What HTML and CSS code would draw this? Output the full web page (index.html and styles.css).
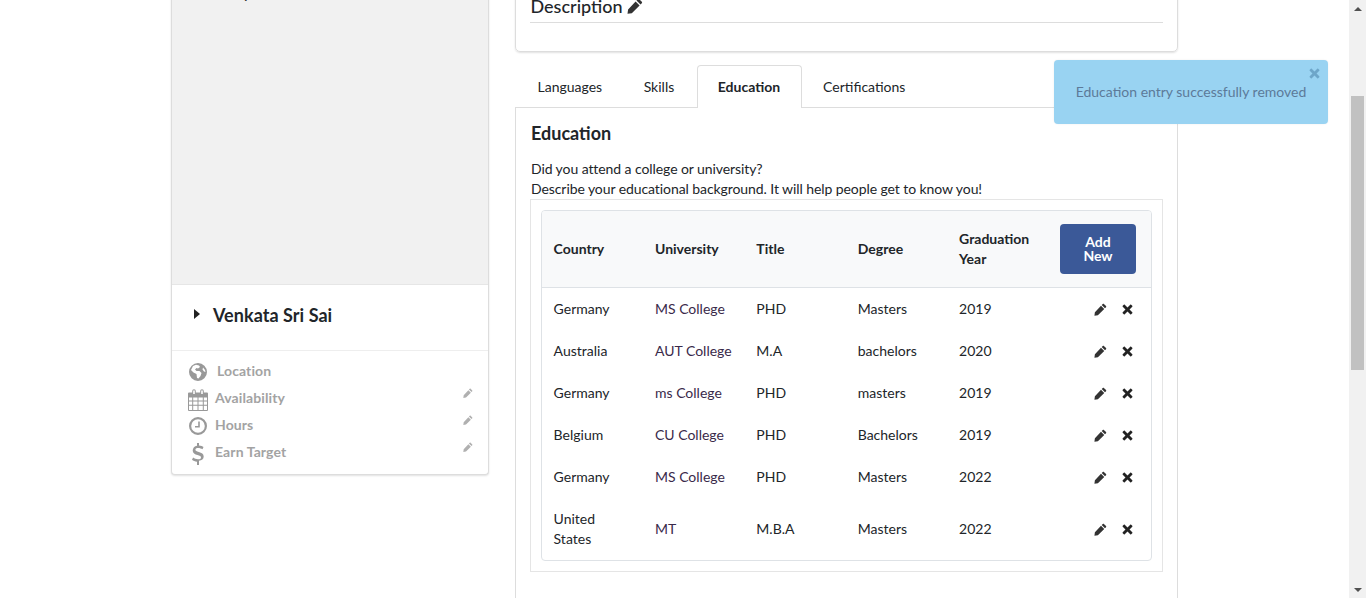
FILE: index.html

```html
<!DOCTYPE html>
<html>
<head>
    <title>Profile - Education</title>
    <link rel="stylesheet" href="styles.css">
</head>
<body>
    <svg class="icon-defs" width="0" height="0">
        <symbol id="pencil" viewBox="0 0 16 16">
            <path d="M12.200 1.200l2.600 2.600c.4.400.4 1 0 1.400l-1.300 1.300-4-4 1.300-1.300c.4-.4 1-.4 1.400 0zM8.600 3.400l4 4-7.800 7.800-4.300.6.600-4.400z"/>
        </symbol>
        <symbol id="cross" viewBox="0 0 12 12">
            <path d="M3 .8L6 3.800 9 .8c.3-.3.7-.3 1 0l1.200 1.200c.3.3.3.7 0 1L8.200 6l3 3c.3.3.3.7 0 1L10 11.200c-.3.3-.7.3-1 0L6 8.200l-3 3c-.3.3-.7.3-1 0L.8 10c-.3-.3-.3-.7 0-1l3-3-3-3c-.3-.3-.3-.7 0-1L2 .8c.3-.3.7-.3 1 0z"/>
        </symbol>
    </svg>

    <div class="window">
        <div class="page">
            <aside class="profile-card">
                <div class="profile-photo"><span class="photo-text">My</span></div>
                <div class="profile-name">
                    <span class="caret"></span>
                    <h2>Venkata Sri Sai</h2>
                </div>
                <ul class="profile-facts">
                    <li>
                        <svg class="fact-icon icon-globe" viewBox="0 0 20 20"><path d="M10 1a9 9 0 1 0 0 18 9 9 0 0 0 0-18zM5 4l3-1.200 3 .6 1 1.600-2 1.500-1.500-.5-1.500 1.500 1.500 1.500h3l2 2-1 3-2 2.500-1.500-.5-.5-4-3-1.500-2.500-2.500zM15 5.500l2 2.500.5 2-1.500-.5-1.500-2z" fill-rule="evenodd"/></svg>
                        <span class="fact-label fact-location">Location</span>
                    </li>
                    <li>
                        <svg class="fact-icon icon-calendar" viewBox="0 0 20 22"><path d="M4.200 3.500V2a1.800 1.800 0 0 1 3.600 0v1.500h4.400V2a1.800 1.800 0 0 1 3.600 0v1.500h3.200a1 1 0 0 1 1 1V21a1 1 0 0 1-1 1H1a1 1 0 0 1-1-1V4.500a1 1 0 0 1 1-1zM5.200 2v3h1.600V2a.8.8 0 0 0-1.600 0zm8 0v3h1.600V2a.8.8 0 0 0-1.600 0zM1 8.500v3h3.200v-3zm4.200 0v3h4.300v-3zm5.300 0v3h4.300v-3zm5.300 0v3H19v-3zM1 12.500v3.200h3.200v-3.200zm4.200 0v3.200h4.300v-3.200zm5.300 0v3.200h4.300v-3.200zm5.300 0v3.200H19v-3.200zM1 16.700V21h3.200v-4.300zm4.200 0V21h4.300v-4.300zm5.300 0V21h4.300v-4.300zm5.300 0V21H19v-4.300z" fill-rule="evenodd"/></svg>
                        <span class="fact-label">Availability</span>
                        <svg class="fact-edit"><use href="#pencil"/></svg>
                    </li>
                    <li>
                        <svg class="fact-icon icon-clock" viewBox="0 0 20 20"><path d="M10 1a9 9 0 1 0 0 18 9 9 0 0 0 0-18zm0 2.200a6.800 6.800 0 1 1 0 13.600 6.800 6.800 0 0 1 0-13.600zM10.200 5.500h1.600v6H7v-1.600h3.200z" fill-rule="evenodd"/></svg>
                        <span class="fact-label">Hours</span>
                        <svg class="fact-edit"><use href="#pencil"/></svg>
                    </li>
                    <li>
                        <svg class="fact-icon icon-dollar" viewBox="0 0 20 22"><path d="M9 0h2v2.600c2 .2 3.500.8 4.500 1.500l-1 2.200c-1.200-.7-2.700-1.300-4.400-1.300-1.700 0-2.700.6-2.700 1.700 0 1.200 1.300 1.600 3.400 2.200 2.800.8 4.900 1.800 4.900 4.500 0 2.500-1.900 4-4.700 4.300V22H9v-3.300c-2-.2-3.800-.9-5-1.900l1.100-2.200c1.400 1 3.100 1.700 4.900 1.700 1.900 0 3-.7 3-1.900 0-1.300-1.300-1.800-3.500-2.400C6.900 11.200 4.700 10.200 4.700 7.700c0-2.600 1.800-4.800 4.300-5z"/></svg>
                        <span class="fact-label">Earn Target</span>
                        <svg class="fact-edit"><use href="#pencil"/></svg>
                    </li>
                </ul>
            </aside>

            <main class="content">
                <section class="description-card">
                    <h3 class="description-title">Description<svg class="title-edit"><use href="#pencil"/></svg></h3>
                </section>

                <nav class="tabs">
                    <a class="tab tab-first">Languages</a>
                    <a class="tab tab-skills">Skills</a>
                    <a class="tab tab-active">Education</a>
                    <a class="tab">Certifications</a>
                </nav>

                <section class="tab-panel">
                    <h3 class="panel-title">Education</h3>
                    <p class="panel-intro">Did you attend a college or university?<br>Describe your educational background. It will help people get to know you!</p>
                    <div class="table-frame">
                        <div class="table-box">
                            <table class="edu-table">
                                <thead>
                                    <tr>
                                        <th class="col-country">Country</th>
                                        <th class="col-university">University</th>
                                        <th class="col-title">Title</th>
                                        <th class="col-degree">Degree</th>
                                        <th class="col-year">Graduation Year</th>
                                        <th class="col-actions"><button class="add-btn">Add New</button></th>
                                    </tr>
                                </thead>
                                <tbody>
                                    <tr>
                                        <td>Germany</td><td class="uni">MS College</td><td>PHD</td><td>Masters</td><td>2019</td>
                                        <td class="row-actions"><svg class="act-edit"><use href="#pencil"/></svg><svg class="act-del"><use href="#cross"/></svg></td>
                                    </tr>
                                    <tr>
                                        <td>Australia</td><td class="uni">AUT College</td><td>M.A</td><td>bachelors</td><td>2020</td>
                                        <td class="row-actions"><svg class="act-edit"><use href="#pencil"/></svg><svg class="act-del"><use href="#cross"/></svg></td>
                                    </tr>
                                    <tr>
                                        <td>Germany</td><td class="uni">ms College</td><td>PHD</td><td>masters</td><td>2019</td>
                                        <td class="row-actions"><svg class="act-edit"><use href="#pencil"/></svg><svg class="act-del"><use href="#cross"/></svg></td>
                                    </tr>
                                    <tr>
                                        <td>Belgium</td><td class="uni">CU College</td><td>PHD</td><td>Bachelors</td><td>2019</td>
                                        <td class="row-actions"><svg class="act-edit"><use href="#pencil"/></svg><svg class="act-del"><use href="#cross"/></svg></td>
                                    </tr>
                                    <tr>
                                        <td>Germany</td><td class="uni">MS College</td><td>PHD</td><td>Masters</td><td>2022</td>
                                        <td class="row-actions"><svg class="act-edit"><use href="#pencil"/></svg><svg class="act-del"><use href="#cross"/></svg></td>
                                    </tr>
                                    <tr>
                                        <td>United States</td><td class="uni">MT</td><td>M.B.A</td><td>Masters</td><td>2022</td>
                                        <td class="row-actions"><svg class="act-edit"><use href="#pencil"/></svg><svg class="act-del"><use href="#cross"/></svg></td>
                                    </tr>
                                </tbody>
                            </table>
                        </div>
                    </div>
                </section>
            </main>
        </div>

        <div class="toast">
            <svg class="toast-close"><use href="#cross"/></svg>
            Education entry successfully removed
        </div>

        <div class="scrollbar">
            <span class="arrow-up"></span>
            <div class="scroll-track"><div class="scroll-thumb"></div></div>
            <span class="arrow-down"></span>
        </div>
    </div>
</body>
</html>
```

FILE: styles.css

```css
html, body {
    margin: 0;
    padding: 0;
    height: 100%;
    overflow: hidden;
    background-color: #fff;
}

body {
    font-family: Lato, "Open Sans", sans-serif;
    font-size: 14px;
    color: #212529;
}

.icon-defs {
    display: block;
    height: 0;
}

.window {
    position: relative;
    display: flex;
    height: 598px;
    overflow: hidden;
}

.page {
    flex: 1;
    display: flex;
    align-items: flex-start;
    gap: 26px;
    padding-left: 171px;
    margin-top: -30px;
}

/* left column */
.profile-card {
    width: 318px;
    box-sizing: border-box;
    border: 1px solid #ddd;
    border-top: none;
    border-radius: 0 0 4px 4px;
    box-shadow: 0 1px 2px rgba(0,0,0,0.12);
    background-color: #fff;
}

.profile-photo {
    height: 314px;
    background-color: #f1f1f1;
    border-bottom: 1px solid #e6e6e6;
    overflow: hidden;
}

.photo-text {
    display: block;
    padding: 10px 0 0 54px;
    font-size: 18px;
    color: #333;
}

.profile-name {
    display: flex;
    align-items: center;
    box-sizing: border-box;
    height: 66px;
    padding: 0 0 6px 22px;
    border-bottom: 1px solid #eee;
}

.profile-name h2 {
    margin: 0 0 0 13px;
    font-size: 18px;
    letter-spacing: 0.05px;
    font-weight: 700;
    color: #212529;
}

.caret {
    width: 0;
    height: 0;
    border-left: 6px solid #222;
    border-top: 5px solid transparent;
    border-bottom: 5px solid transparent;
    margin-bottom: 2px;
}

.profile-facts {
    list-style-type: none;
    margin: 0;
    padding: 6px 15px 9px 16px;
}

.profile-facts li {
    display: flex;
    align-items: center;
    height: 27px;
    color: #9a9a9a;
}

.fact-icon {
    flex: none;
    fill: #999;
    width: 20px;
    height: 20px;
    margin-top: 3px;
}

.icon-calendar {
    height: 22px;
    margin-top: 4px;
}

.icon-dollar {
    height: 22px;
    margin-top: 4px;
}

.fact-label {
    margin-left: 7px;
    font-weight: 700;
    font-size: 14px;
    letter-spacing: 0.1px;
    color: #a3a3a3;
}

.fact-location {
    margin-left: 9px;
}

.fact-edit {
    width: 10px;
    height: 10px;
    margin-left: auto;
    margin-bottom: 10px;
    fill: #b0b0b0;
}

/* right column */
.content {
    width: 663px;
    flex: none;
}

.description-card {
    height: 82px;
    box-sizing: border-box;
    border: 1px solid #ddd;
    border-radius: 0 0 5px 5px;
    box-shadow: 0 1px 2px rgba(0,0,0,0.12);
    padding: 0 14px;
    overflow: hidden;
}

.description-title {
    margin: 24px 0 0 0;
    padding: 0 0 5px 0.5px;
    border-bottom: 1px solid #ddd;
    font-size: 18px;
    line-height: 22px;
    font-weight: 500;
    color: #212529;
}

.title-edit {
    width: 16px;
    height: 16px;
    fill: #333;
    margin-left: 4px;
    vertical-align: -1px;
}

.tabs {
    display: flex;
    margin-top: 13px;
    height: 42px;
    position: relative;
    z-index: 1;
}

.tab {
    padding: 13px 21px 0 21px;
    color: #212529;
    box-sizing: border-box;
    height: 43px;
}

.tab-first {
    padding-left: 22.500px;
    padding-right: 20.500px;
}

.tab-skills {
    padding-right: 22.500px;
}

.tab-active {
    font-weight: 700;
    background-color: #fff;
    border: 1px solid #ddd;
    border-bottom: none;
    border-radius: 4px 4px 0 0;
    padding: 12px 21px 0 20px;
}

.tab-panel {
    box-sizing: border-box;
    height: 520px;
    border: 1px solid #ddd;
    padding: 14px 14px;
}

.panel-title {
    margin: 0 0 15px 0;
    padding-left: 1px;
    font-size: 18px;
    line-height: 22px;
    font-weight: 700;
}

.panel-intro {
    margin: 0;
    padding-left: 1px;
    line-height: 20px;
    letter-spacing: -0.08px;
}

.table-frame {
    border: 1px solid #e5e5e5;
    padding: 10px;
}

.table-box {
    border: 1px solid #dee2e6;
    border-radius: 4px;
    overflow: hidden;
}

.edu-table {
    width: 100%;
    border-collapse: collapse;
    table-layout: fixed;
}

.edu-table th {
    text-align: left;
    font-weight: 700;
    line-height: 20px;
    padding: 0 12.400px 0 11.600px;
    height: 76px;
    background-color: #f8f9fa;
    border-bottom: 1px solid #dee2e6;
}

.edu-table td {
    padding: 11px 12.400px 11px 11.600px;
    line-height: 20px;
    vertical-align: middle;
}

.col-country, .col-university, .col-title, .col-degree, .col-year {
    width: 77.400px;
}

.col-actions {
    width: auto;
}

.edu-table .col-actions {
    padding: 0 15px 0 0;
    text-align: right;
}

.uni {
    color: #3a2a4a;
}

.add-btn {
    width: 76px;
    height: 50px;
    background-color: #3b5998;
    color: #fff;
    border: none;
    border-radius: 4px;
    font-family: inherit;
    font-size: 14px;
    font-weight: 700;
    line-height: 14px;
    padding: 0 14px;
}

.edu-table .row-actions {
    padding: 0 18px 1px 0;
    text-align: right;
    white-space: nowrap;
}

.row-actions svg {
    vertical-align: middle;
    fill: #222;
}

.row-actions .act-edit {
    width: 13px;
    height: 13px;
    margin-right: 15px;
    fill: #333;
}

.act-del {
    width: 11px;
    height: 11px;
}

/* notification */
.toast {
    position: absolute;
    left: 1054px;
    top: 60px;
    width: 274px;
    height: 64px;
    box-sizing: border-box;
    padding-top: 23px;
    text-align: center;
    background-color: #99d3f2;
    border-radius: 4px;
    color: #5c7a99;
    box-shadow: 0 0 2px rgba(0,0,0,0.08);
}

.toast-close {
    position: absolute;
    right: 8px;
    top: 8px;
    width: 11px;
    height: 11px;
    fill: #6ea6c9;
}

/* scrollbar */
.scrollbar {
    flex: none;
    width: 17px;
    background-color: #f1f1f1;
    display: flex;
    flex-direction: column;
    align-items: center;
}

.arrow-up, .arrow-down {
    flex: none;
    width: 0;
    height: 0;
    border-left: 4px solid transparent;
    border-right: 4px solid transparent;
}

.arrow-up {
    margin-top: 7px;
    border-bottom: 4px solid #505050;
}

.arrow-down {
    margin-bottom: 6px;
    border-top: 4px solid #505050;
}

.scroll-track {
    flex: 1;
    width: 100%;
    padding-top: 85px;
}

.scroll-thumb {
    width: 13px;
    height: 274px;
    margin-left: 2px;
    background-color: #c1c1c1;
}
```
